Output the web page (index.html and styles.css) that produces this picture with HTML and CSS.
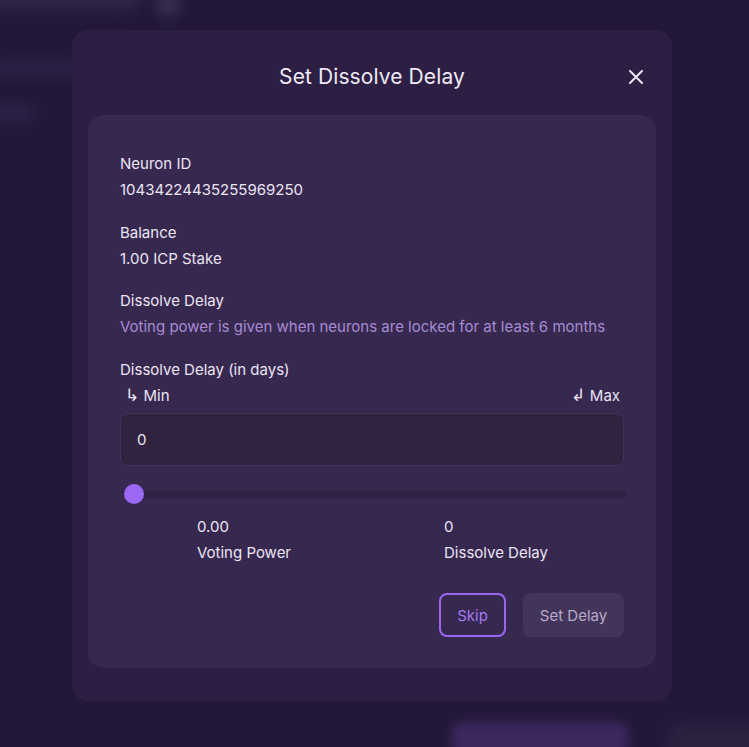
FILE: index.html
```html
<!DOCTYPE html>
<html>
<head>
<meta charset="utf-8">
<link rel="stylesheet" href="styles.css">
</head>
<body>
<div class="backdrop">
  <div class="blur blur-top"></div>
  <div class="blur blur-dot"></div>
  <div class="blur blur-line1"></div>
  <div class="blur blur-line2"></div>
  <div class="blur blur-btn"></div>
  <div class="blur blur-btn2"></div>
</div>
<div class="overlay">
  <div class="modal">
    <div class="modal-head">
      <h1 class="title">Set Dissolve Delay</h1>
      <button class="close" aria-label="Close">
        <svg width="14" height="14" viewBox="0 0 14 14"><path d="M1 1L13 13M13 1L1 13" stroke="#ece6f3" stroke-width="2" stroke-linecap="round"/></svg>
      </button>
    </div>
    <div class="card">
      <div class="field">
        <div class="label">Neuron ID</div>
        <div class="value">10434224435255969250</div>
      </div>
      <div class="field field-tight">
        <div class="label">Balance</div>
        <div class="value">1.00 ICP Stake</div>
      </div>
      <div class="field">
        <div class="label">Dissolve Delay</div>
        <div class="desc">Voting power is given when neurons are locked for at least 6 months</div>
      </div>
      <div class="delay">
        <div class="label">Dissolve Delay (in days)</div>
        <div class="minmax">
          <span><span class="arrow">↳</span> Min</span>
          <span><span class="arrow">↲</span> Max</span>
        </div>
        <div class="input">0</div>
        <div class="slider"><div class="track"></div><div class="thumb"></div></div>
        <div class="stats">
          <div class="stat"><div>0.00</div><div>Voting Power</div></div>
          <div class="stat"><div>0</div><div>Dissolve Delay</div></div>
        </div>
      </div>
      <div class="actions">
        <button class="btn btn-skip">Skip</button>
        <button class="btn btn-set">Set Delay</button>
      </div>
    </div>
  </div>
</div>
</body>
</html>
```
FILE: styles.css
```css
* { box-sizing: border-box; }
html, body { margin: 0; padding: 0; }
body {
  width: 749px;
  height: 747px;
  overflow: hidden;
  background: #23183a;
  font-family: Inter, Lato, sans-serif;
  color: #ebe5f3;
  position: relative;
}
.backdrop { position: absolute; inset: 0; }
.blur { position: absolute; filter: blur(8px); }
.blur-top { left: -10px; top: -14px; width: 150px; height: 22px; background: #352a4a; border-radius: 10px; }
.blur-dot { left: 158px; top: -6px; width: 20px; height: 20px; background: #4a3e5e; border-radius: 50%; }
.blur-line1 { left: -10px; top: 62px; width: 90px; height: 14px; background: #30254a; border-radius: 8px; }
.blur-line2 { left: -10px; top: 106px; width: 45px; height: 14px; background: #30254a; border-radius: 8px; }
.blur-btn { left: 452px; top: 722px; width: 176px; height: 50px; background: #3c275e; border-radius: 10px; filter: blur(5px); }
.blur-btn2 { left: 668px; top: 724px; width: 100px; height: 40px; background: #2c2240; border-radius: 10px; }

.overlay {
  position: absolute; inset: 0;
  padding: 30px 0 0 72px;
}
.modal {
  width: 600px;
  height: 671px;
  background: #2d1f44;
  border-radius: 16px;
  padding: 0 16px;
}
.modal-head {
  height: 85px;
  display: flex;
  align-items: center;
  justify-content: center;
  position: relative;
}
.title {
  margin: 0;
  margin-top: 8px;
  font-size: 21px;
  font-weight: 400;
  color: #efe9f6;
  letter-spacing: 0.1px;
}
.close {
  position: absolute;
  right: 13px;
  top: 40px;
  background: none;
  border: 0;
  padding: 0;
  width: 14px;
  height: 14px;
  display: flex;
}
.card {
  background: #372850;
  border-radius: 16px;
  height: 553px;
  padding: 36px 32px 0 32px;
  font-size: 15px;
}
.field { margin-bottom: 17px; }
.field-tight { margin-bottom: 16px; }
.label, .value, .desc { line-height: 26px; }
.desc { color: #a78bd2; }
.minmax {
  display: flex;
  justify-content: space-between;
  line-height: 26px;
  height: 26px;
  padding-left: 5px;
  padding-right: 4px;
}
.arrow { font-family: "DejaVu Sans", sans-serif; font-size: 17px; line-height: 1; }
.input {
  margin-top: 4px;
  height: 53px;
  border: 1px solid #42335a;
  background: #31233f;
  border-radius: 8px;
  padding: 0 16px;
  display: flex;
  align-items: center;
  font-size: 15px;
}
.slider {
  position: relative;
  height: 22px;
  margin-top: 17px;
  margin-right: -3px;
}
.track {
  position: absolute;
  left: 4px; right: 0; top: 7px;
  height: 8px;
  background: #2f2344;
  border-radius: 4px;
}
.thumb {
  position: absolute;
  left: 4px; top: 1px;
  width: 20px; height: 20px;
  border-radius: 50%;
  background: #9b68f6;
}
.stats {
  display: flex;
  padding-left: 77px;
  margin-top: 9px;
  line-height: 26px;
}
.stat { width: 247px; flex: none; }
.actions {
  display: flex;
  justify-content: flex-end;
  gap: 17px;
  margin-top: 27px;
}
.btn {
  font-family: inherit;
  font-size: 15px;
  border-radius: 8px;
  height: 44px;
  cursor: pointer;
}
.btn-skip {
  width: 67px;
  background: transparent;
  border: 2px solid #9b66ee;
  color: #a57af0;
}
.btn-set {
  width: 101px;
  background: #433459;
  border: 0;
  color: #b8aacb;
}
```
